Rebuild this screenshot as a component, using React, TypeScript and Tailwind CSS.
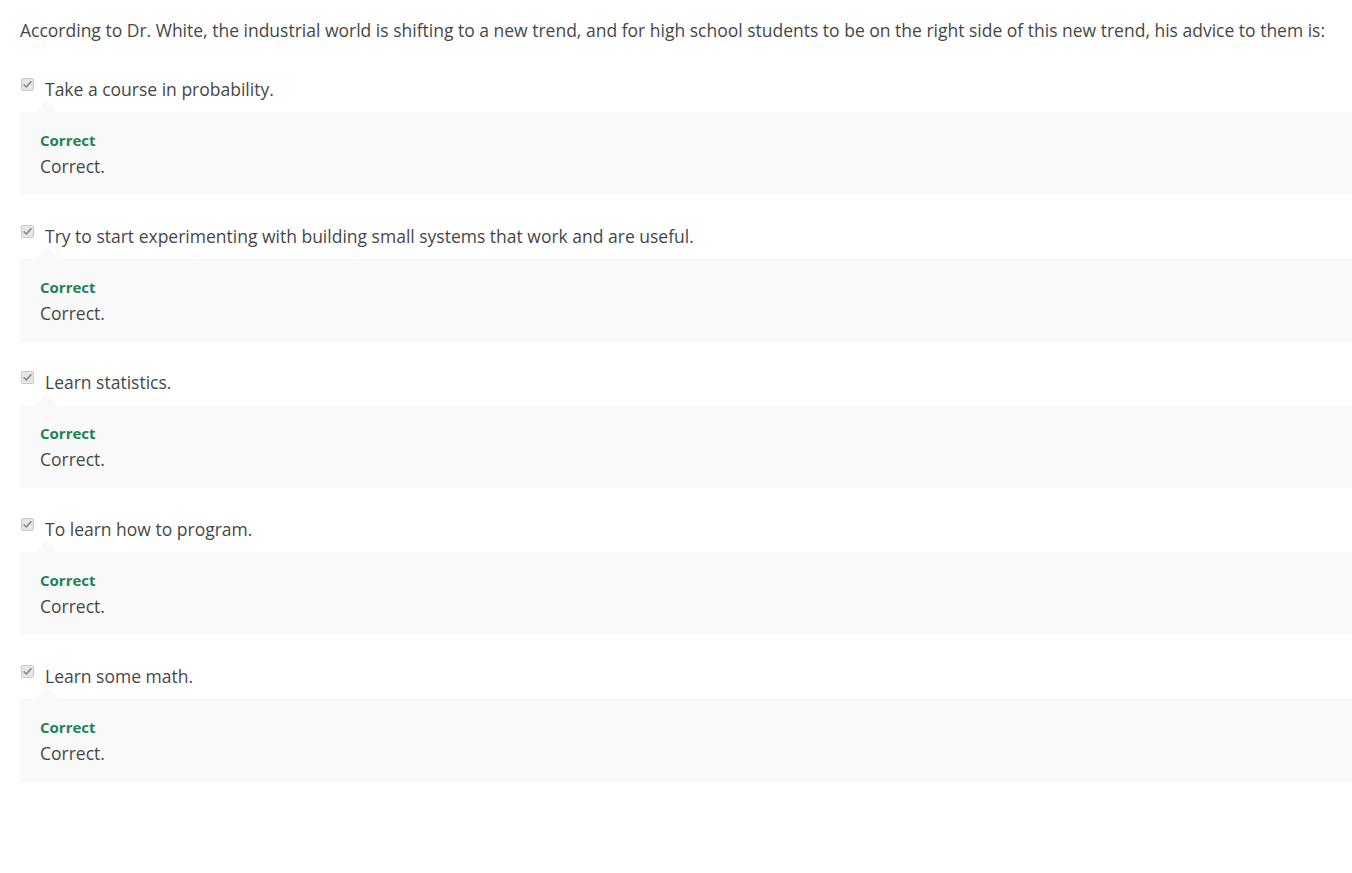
const options = [
  "Take a course in probability.",
  "Try to start experimenting with building small systems that work and are useful.",
  "Learn statistics.",
  "To learn how to program.",
  "Learn some math.",
];

function CheckedBox() {
  return (
    <span className="mt-[1px] ml-px flex size-[13px] shrink-0 items-center justify-center rounded-[2px] border border-[#c9c9c9] bg-[#e6e6e6]">
      <svg viewBox="0 0 12 12" className="size-[9px]">
        <path
          d="M1.5 6.5 L4.5 9.3 L10.5 2.5"
          fill="none"
          stroke="#8a8a8a"
          strokeWidth="2.2"
          strokeLinecap="round"
          strokeLinejoin="round"
        />
      </svg>
    </span>
  );
}

export default function App() {
  return (
    <div
      className="min-h-screen bg-white pl-5 pt-[17px] text-[17.5px] leading-[27px] text-[#474747]"
      style={{ fontFamily: '"Open Sans", "Liberation Sans", sans-serif' }}
    >
      <p className="whitespace-nowrap">
        According to Dr. White, the industrial world is shifting to a new trend, and for high school
        students to be on the right side of this new trend, his advice to them is:
      </p>

      <div className="mt-[33px] flex flex-col gap-[28.7px]">
        {options.map((text) => (
          <div key={text}>
            <label className="flex items-start gap-[11px]">
              <CheckedBox />
              <span className="-mt-[1px]">{text}</span>
            </label>
            <div className="relative mt-[9px] bg-[#f9f9f9] pt-[18px] pb-[15px] pl-5">
              <span className="absolute -top-[12px] left-[16px] h-0 w-0 border-x-[11px] border-b-[12px] border-x-transparent border-b-[#f9f9f9]" />
              <div className="text-[15px] font-bold leading-[20px] text-[#1f8354]">Correct</div>
              <div className="mt-[3px]">Correct.</div>
            </div>
          </div>
        ))}
      </div>
    </div>
  );
}
